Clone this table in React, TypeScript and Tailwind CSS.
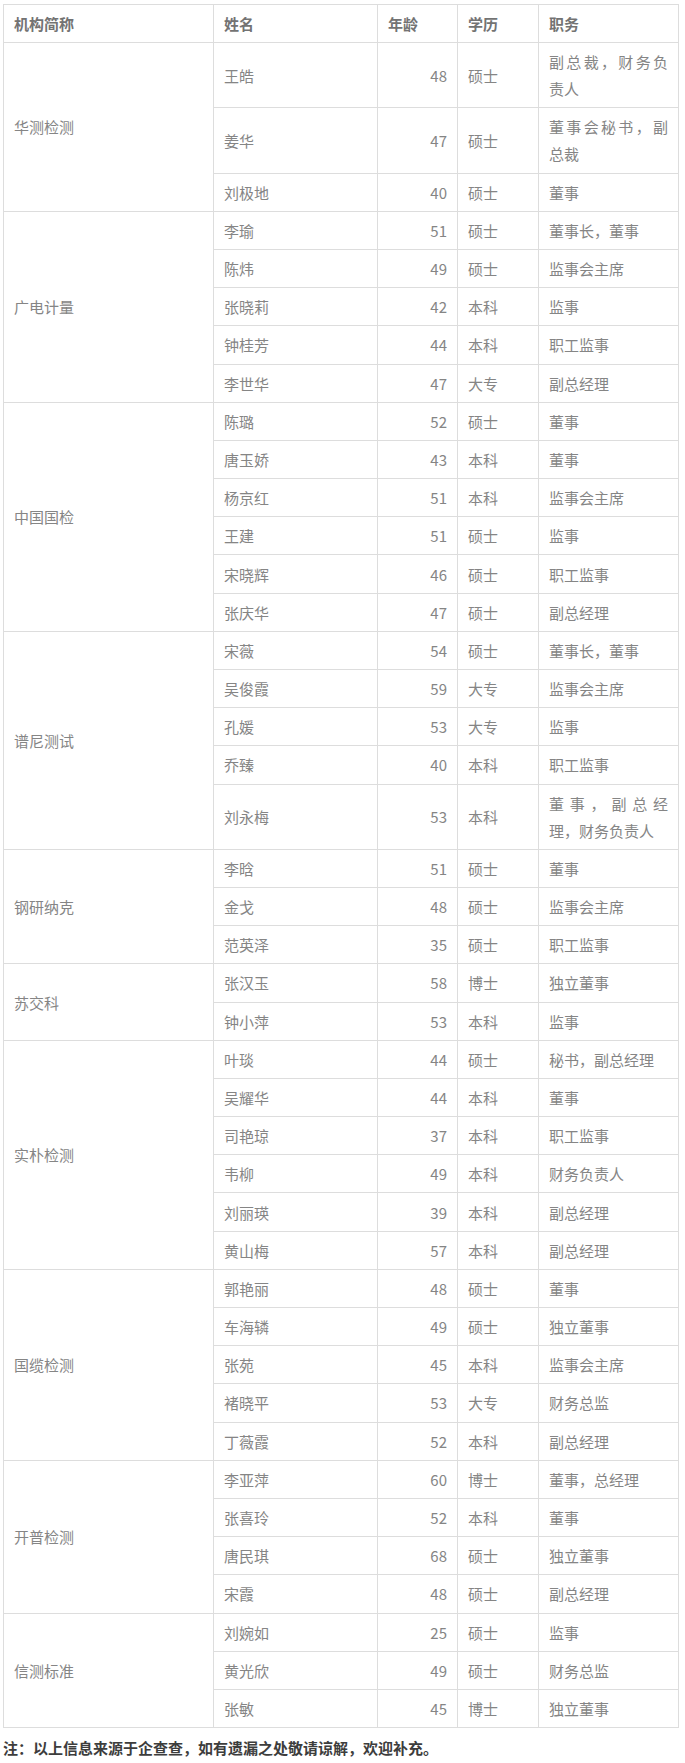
const ROWS: { org: string; people: [string, number, string, string][] }[] = [
  { org: '华测检测', people: [
    ['王皓', 48, '硕士', '副总裁，财务负责人'],
    ['姜华', 47, '硕士', '董事会秘书，副总裁'],
    ['刘极地', 40, '硕士', '董事'],
  ] },
  { org: '广电计量', people: [
    ['李瑜', 51, '硕士', '董事长，董事'],
    ['陈炜', 49, '硕士', '监事会主席'],
    ['张晓莉', 42, '本科', '监事'],
    ['钟桂芳', 44, '本科', '职工监事'],
    ['李世华', 47, '大专', '副总经理'],
  ] },
  { org: '中国国检', people: [
    ['陈璐', 52, '硕士', '董事'],
    ['唐玉娇', 43, '本科', '董事'],
    ['杨京红', 51, '本科', '监事会主席'],
    ['王建', 51, '硕士', '监事'],
    ['宋晓辉', 46, '硕士', '职工监事'],
    ['张庆华', 47, '硕士', '副总经理'],
  ] },
  { org: '谱尼测试', people: [
    ['宋薇', 54, '硕士', '董事长，董事'],
    ['吴俊霞', 59, '大专', '监事会主席'],
    ['孔媛', 53, '大专', '监事'],
    ['乔臻', 40, '本科', '职工监事'],
    ['刘永梅', 53, '本科', '董事，副总经理，财务负责人'],
  ] },
  { org: '钢研纳克', people: [
    ['李晗', 51, '硕士', '董事'],
    ['金戈', 48, '硕士', '监事会主席'],
    ['范英泽', 35, '硕士', '职工监事'],
  ] },
  { org: '苏交科', people: [
    ['张汉玉', 58, '博士', '独立董事'],
    ['钟小萍', 53, '本科', '监事'],
  ] },
  { org: '实朴检测', people: [
    ['叶琰', 44, '硕士', '秘书，副总经理'],
    ['吴耀华', 44, '本科', '董事'],
    ['司艳琼', 37, '本科', '职工监事'],
    ['韦柳', 49, '本科', '财务负责人'],
    ['刘丽瑛', 39, '本科', '副总经理'],
    ['黄山梅', 57, '本科', '副总经理'],
  ] },
  { org: '国缆检测', people: [
    ['郭艳丽', 48, '硕士', '董事'],
    ['车海辚', 49, '硕士', '独立董事'],
    ['张苑', 45, '本科', '监事会主席'],
    ['褚晓平', 53, '大专', '财务总监'],
    ['丁薇霞', 52, '本科', '副总经理'],
  ] },
  { org: '开普检测', people: [
    ['李亚萍', 60, '博士', '董事，总经理'],
    ['张喜玲', 52, '本科', '董事'],
    ['唐民琪', 68, '硕士', '独立董事'],
    ['宋霞', 48, '硕士', '副总经理'],
  ] },
  { org: '信测标准', people: [
    ['刘婉如', 25, '硕士', '监事'],
    ['黄光欣', 49, '硕士', '财务总监'],
    ['张敏', 45, '博士', '独立董事'],
  ] },
]

// row height ~38.2px in the reference, hence the fractional padding
const TD = 'border border-[#dddddd] px-[10px] py-[5.1px] align-middle'
const TH = 'border border-[#dddddd] px-[10px] py-[5.1px] text-left font-bold text-[#737373]'

export default function App() {
  return (
    <div className="bg-white w-[685px] min-h-[1763px] pt-[4px] pl-[3px] font-['Noto_Sans_CJK_SC',sans-serif] text-[15px] leading-[27px]">
      <table className="table-fixed border-collapse w-[675px] text-[#858585]">
        <colgroup>
          <col className="w-[210px]" />
          <col className="w-[164px]" />
          <col className="w-[80px]" />
          <col className="w-[81px]" />
          <col className="w-[140px]" />
        </colgroup>
        <thead>
          <tr>
            <th className={TH}>机构简称</th>
            <th className={TH}>姓名</th>
            <th className={TH}>年龄</th>
            <th className={TH}>学历</th>
            <th className={TH}>职务</th>
          </tr>
        </thead>
        <tbody>
          {ROWS.map(group =>
            group.people.map(([name, age, edu, title], i) => (
              <tr key={group.org + name}>
                {i === 0 && (
                  <td rowSpan={group.people.length} className={TD}>{group.org}</td>
                )}
                <td className={TD}>{name}</td>
                <td className={`${TD} text-right`}>{age}</td>
                <td className={TD}>{edu}</td>
                <td className={`${TD} text-justify`}>{title}</td>
              </tr>
            ))
          )}
        </tbody>
      </table>
      <p className="mt-[6px] font-bold text-[#3d3d3d]">
        注：以上信息来源于企查查，如有遗漏之处敬请谅解，欢迎补充。
      </p>
    </div>
  )
}
